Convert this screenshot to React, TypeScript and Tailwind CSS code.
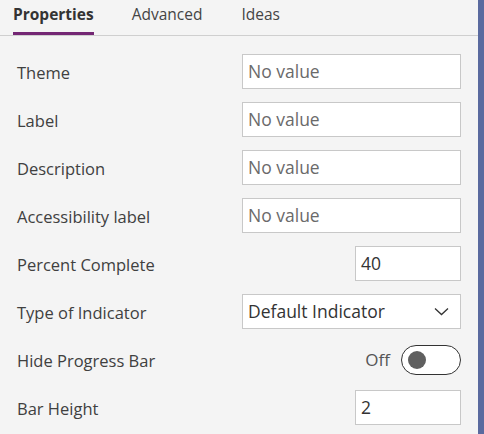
import React from "react";

const font = { fontFamily: '"Open Sans", "Noto Sans", sans-serif' };

function TextBox({ value, placeholder, narrow }: { value?: string; placeholder?: string; narrow?: boolean }) {
  return (
    <div
      className={`h-[35px] ${narrow ? "w-[106px]" : "w-[219px]"} bg-white border border-[#c8c8c8] flex items-center px-[5px] text-[17.5px] ${value ? "text-[#333333]" : "text-[#6a6a6a]"}`}
    >
      {value ?? placeholder}
    </div>
  );
}

function Row({ label, children }: { label: string; children: React.ReactNode }) {
  return (
    <div className="h-[35px] flex items-center justify-between pl-[17px] pr-[17px]">
      <span className="text-[16.5px] text-[#404040] pt-[3px]">{label}</span>
      {children}
    </div>
  );
}

export default function App() {
  return (
    <div className="w-[484px] h-[434px] flex bg-[#f4f4f4] overflow-hidden" style={font}>
      <div className="flex-1 flex flex-col">
        <div className="h-[36px] border-b border-[#cfcfcf] flex items-start pl-[13px]">
          <div className="relative h-[35px] flex items-center pb-[6px]">
            <span className="text-[15.5px] font-bold text-[#333333]">Properties</span>
            <div className="absolute left-0 right-0 bottom-0 h-[3px] bg-[#742774]" />
          </div>
          <div className="h-[35px] flex items-center pb-[6px] ml-[38px]">
            <span className="text-[15.5px] text-[#444444]">Advanced</span>
          </div>
          <div className="h-[35px] flex items-center pb-[6px] ml-[39px]">
            <span className="text-[15.5px] text-[#444444]">Ideas</span>
          </div>
        </div>
        <div className="flex flex-col gap-[13px] pt-[18px]">
          <Row label="Theme">
            <TextBox placeholder="No value" />
          </Row>
          <Row label="Label">
            <TextBox placeholder="No value" />
          </Row>
          <Row label="Description">
            <TextBox placeholder="No value" />
          </Row>
          <Row label="Accessibility label">
            <TextBox placeholder="No value" />
          </Row>
          <Row label="Percent Complete">
            <TextBox value="40" narrow />
          </Row>
          <Row label="Type of Indicator">
            <div className="h-[35px] w-[219px] bg-white border border-[#c8c8c8] flex items-center justify-between pl-[5px] pr-[11px] text-[17.5px] text-[#333333]">
              <span>Default Indicator</span>
              <svg width="15" height="9" viewBox="0 0 15 9" fill="none">
                <path d="M1 1.5 L7.5 7.5 L14 1.5" stroke="#333333" strokeWidth="1.3" />
              </svg>
            </div>
          </Row>
          <Row label="Hide Progress Bar">
            <div className="flex items-center gap-[11px]">
              <span className="text-[17px] text-[#555555]">Off</span>
              <div className="w-[60px] h-[30px] rounded-full border border-[#333333] bg-white flex items-center pl-[6px]">
                <div className="w-[18px] h-[18px] rounded-full bg-[#5f5f5f]" />
              </div>
            </div>
          </Row>
          <Row label="Bar Height">
            <TextBox value="2" narrow />
          </Row>
        </div>
      </div>
      <div className="w-[6px] bg-[#5a6a9f]" />
    </div>
  );
}
